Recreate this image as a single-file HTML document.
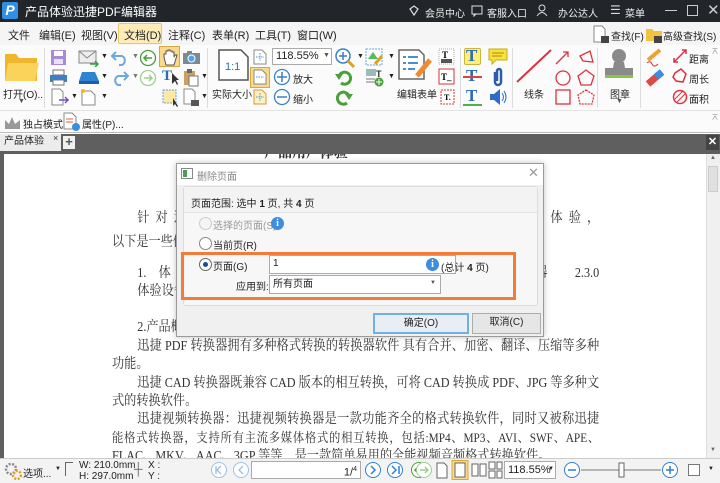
<!DOCTYPE html>
<html><head><meta charset="utf-8">
<style>
*{margin:0;padding:0;box-sizing:border-box}
body{width:720px;height:483px;overflow:hidden;position:relative;background:#fff;font-family:"Liberation Sans","Noto Sans CJK SC",sans-serif;font-size:11px;color:#222}
.a{position:absolute;white-space:nowrap}
.t{font-size:10px}
.sep{position:absolute;width:1px;background:#dcdcdc}
.dc{position:absolute;left:112px;top:0;width:560px;height:458px;transform:scaleX(0.87);transform-origin:0 0;overflow:visible}
.doc{position:absolute;font-family:"Liberation Serif","Noto Serif CJK SC",serif;font-size:14px;color:#333;white-space:nowrap}
.j{text-align:justify;text-align-last:justify;white-space:normal;overflow:hidden;height:20px}
.rad{position:absolute;width:13px;height:13px;border-radius:50%;border:1px solid #888;background:#fff}
.info{position:absolute;width:13px;height:13px;border-radius:50%;background:#3b8ee0;color:#fff;font-size:10px;text-align:center;line-height:13px;font-weight:bold;font-family:"Liberation Serif",serif}
.btn{position:absolute;border:1px solid #adadad;background:#e6e6e6;text-align:center;font-size:10px;line-height:18px}
</style></head><body>
<!-- doc text first (under chrome) -->
<div class="dc">
<div class="doc" style="left:175px;top:139px;font-weight:bold;font-size:16px">产品用户体验</div>
<div class="doc j" style="left:29px;top:207px;width:531px">针对迅捷PDF转换器系列软件进行产品评测提升用户体验，</div>
<div class="doc" style="left:0;top:231px">以下是一些体验内容。</div>
<div class="doc j" style="left:29px;top:262px;width:531px">1.体验对象：迅捷PDF转换器迅捷转换器 2.3.0</div>
<div class="doc" style="left:29px;top:280px">体验设备：电脑</div>
<div class="doc" style="left:29px;top:316px">2.产品概述</div>
<div class="doc j" style="left:29px;top:335px;width:531px">迅捷 PDF 转换器拥有多种格式转换的转换器软件 具有合并、加密、翻译、压缩等多种</div>
<div class="doc" style="left:0;top:353px">功能。</div>
<div class="doc j" style="left:29px;top:372px;width:531px">迅捷 CAD 转换器既兼容 CAD 版本的相互转换，可将 CAD 转换成 PDF、JPG 等多种文件格</div>
<div class="doc" style="left:0;top:390px">式的转换软件。</div>
<div class="doc j" style="left:29px;top:408px;width:531px">迅捷视频转换器：迅捷视频转换器是一款功能齐全的格式转换软件，同时又被称迅捷万</div>
<div class="doc j" style="left:0;top:427px;width:560px;font-size:13px">能格式转换器，支持所有主流多媒体格式的相互转换，包括:MP4、MP3、AVI、SWF、APE、FLV、</div>
<div class="doc" style="left:0;top:445px">FLAC、MKV、AAC、3GP 等等，是一款简单易用的全能视频音频格式转换软件。</div>
</div>
<!-- title bar -->
<div class="a" style="left:0;top:0;width:720px;height:22px;background:#22262b"></div>
<div class="a" style="left:2px;top:2px;width:16px;height:17px;background:#2f8fe6;border-radius:2px;color:#fff;font-weight:bold;font-size:14px;text-align:center;line-height:17px;font-style:italic">P</div>
<div class="a" style="left:25px;top:3px;color:#fff;font-size:12px">产品体验迅捷PDF编辑器</div>
<svg class="a" style="left:408px;top:5px" width="12" height="12"><path d="M2 4 L6 1 L10 4 L6 10 Z" fill="none" stroke="#ddd" stroke-width="1.2"/></svg>
<div class="a" style="left:425px;top:5px;color:#eee;font-size:10px">会员中心</div>
<svg class="a" style="left:471px;top:5px" width="12" height="12"><rect x="1" y="1" width="10" height="8" fill="none" stroke="#ddd"/><path d="M3 9 L3 11 L5 9" stroke="#ddd" fill="none"/></svg>
<div class="a" style="left:487px;top:5px;color:#eee;font-size:10px">客服入口</div>
<svg class="a" style="left:536px;top:4px" width="12" height="13"><circle cx="6" cy="4" r="3" fill="none" stroke="#ddd"/><path d="M1 12 Q6 5 11 12" fill="none" stroke="#ddd"/></svg>
<div class="a" style="left:558px;top:5px;color:#eee;font-size:10px">办公达人</div>
<div class="a" style="left:610px;top:3px;color:#ddd;font-size:12px">☰</div>
<div class="a" style="left:625px;top:5px;color:#eee;font-size:10px">菜单</div>
<div class="a" style="left:665px;top:10px;width:12px;height:1px;background:#ccc"></div>
<div class="a" style="left:687px;top:5px;width:11px;height:11px;border:1px solid #ccc"></div>
<div class="a" style="left:707px;top:1px;color:#ccc;font-size:15px">✕</div>
<!-- menu -->
<div class="a" style="left:0;top:22px;width:720px;height:23px;background:#f5f5f5"></div>
<div class="a" style="left:118px;top:23px;width:44px;height:21px;background:#fcecb8;border:1px solid #e8c76a;border-radius:2px"></div>
<div class="a" style="left:8px;top:27px">文件</div>
<div class="a" style="left:39px;top:27px">编辑(E)</div>
<div class="a" style="left:81px;top:27px">视图(V)</div>
<div class="a" style="left:124px;top:27px">文档(D)</div>
<div class="a" style="left:168px;top:27px">注释(C)</div>
<div class="a" style="left:212px;top:27px">表单(R)</div>
<div class="a" style="left:255px;top:27px">工具(T)</div>
<div class="a" style="left:297px;top:27px">窗口(W)</div>
<svg class="a" style="left:592px;top:25px" width="18" height="19"><path d="M2 1 H10 L13 4 V17 H2 Z" fill="#fff" stroke="#888"/><rect x="9" y="11" width="8" height="7" fill="#444"/></svg>
<div class="a t" style="left:611px;top:28px">查找(F)</div>
<svg class="a" style="left:645px;top:25px" width="18" height="19"><path d="M1 4 H7 L9 6 H17 V16 H1 Z" fill="#f3c340"/><rect x="9" y="11" width="8" height="7" fill="#444"/></svg>
<div class="a t" style="left:663px;top:28px">高级查找(S)</div>
<!-- toolbar -->
<div class="a" style="left:0;top:45px;width:720px;height:66px;background:#fbfbfb;border-bottom:1px solid #e3e3e3"></div>
<svg class="a" style="left:4px;top:51px" width="36" height="32"><path d="M1 3 H12 L15 7 H33 V30 H1 Z" fill="#f0b52a"/><path d="M4 12 H35 L31 30 H1 Z" fill="#fcd35a"/></svg>
<div class="a t" style="left:3px;top:86px">打开(O)...</div>
<div class="a" style="left:18px;top:98px;font-size:7px;color:#555">▼</div>
<div class="sep" style="left:44px;top:48px;height:60px"></div>
<svg class="a" style="left:50px;top:49px" width="17" height="17"><rect x="1" y="1" width="15" height="15" fill="#a98ad6"/><rect x="4" y="2" width="9" height="5" fill="#fff"/><rect x="4" y="10" width="9" height="5" fill="#e8e0f5"/></svg>
<svg class="a" style="left:49px;top:69px" width="19" height="17"><rect x="4" y="1" width="11" height="5" fill="#fff" stroke="#777"/><rect x="1" y="6" width="17" height="7" fill="#3a7fc8"/><rect x="4" y="11" width="11" height="5" fill="#fff" stroke="#777"/></svg>
<svg class="a" style="left:50px;top:88px" width="20" height="18"><path d="M2 1 H10 L13 4 V17 H2 Z" fill="#fff" stroke="#888"/><path d="M9 12 H18 M15 9 L18 12 L15 15" stroke="#7a4cc8" fill="none" stroke-width="1.5"/></svg>
<svg class="a" style="left:78px;top:50px" width="22" height="17"><rect x="1" y="1" width="17" height="12" fill="#eee" stroke="#888"/><path d="M1 1 L9 8 L18 1" fill="none" stroke="#888"/><path d="M12 14 H20 M17 11 L20 14 L17 17" stroke="#2aa34a" stroke-width="1.5" fill="none"/></svg>
<svg class="a" style="left:78px;top:71px" width="22" height="14"><path d="M4 1 H17 L21 10 H1 Z" fill="#2f82d2"/><rect x="1" y="10" width="20" height="3" fill="#1c5ea8"/></svg>
<svg class="a" style="left:79px;top:88px" width="20" height="18"><path d="M3 3 H12 L16 7 V17 H3 Z" fill="#fff" stroke="#888"/><circle cx="4" cy="3" r="2" fill="#f0b52a"/></svg>
<div class="a" style="left:101px;top:53px;font-size:7px">▼</div><div class="a" style="left:101px;top:73px;font-size:7px">▼</div><div class="a" style="left:71px;top:93px;font-size:7px">▼</div><div class="a" style="left:101px;top:93px;font-size:7px">▼</div>
<svg class="a" style="left:110px;top:50px" width="20" height="16"><path d="M6 2 L2 6 L6 10 M2 6 H12 A5 5 0 0 1 12 15 H9" fill="none" stroke="#6fa6e0" stroke-width="2"/></svg>
<svg class="a" style="left:110px;top:70px" width="20" height="16"><path d="M14 2 L18 6 L14 10 M18 6 H8 A5 5 0 0 0 8 15 H11" fill="none" stroke="#6fa6e0" stroke-width="2"/></svg>
<div class="a" style="left:132px;top:53px;font-size:7px;color:#777">▼</div><div class="a" style="left:132px;top:73px;font-size:7px;color:#777">▼</div>
<svg class="a" style="left:139px;top:49px" width="18" height="18"><circle cx="9" cy="9" r="7.5" fill="#fff" stroke="#4a9c3a" stroke-width="1.3"/><path d="M13 9 H5 M8 6 L5 9 L8 12" stroke="#4a9c3a" stroke-width="1.5" fill="none"/></svg>
<svg class="a" style="left:139px;top:69px" width="18" height="18"><circle cx="9" cy="9" r="7.5" fill="#fff" stroke="#9ccf8e" stroke-width="1.3"/><path d="M5 9 H13 M10 6 L13 9 L10 12" stroke="#9ccf8e" stroke-width="1.5" fill="none"/></svg>
<div class="a" style="left:159px;top:46px;width:21px;height:21px;background:#fad98c;border:1px solid #d9a83c"></div>
<svg class="a" style="left:162px;top:48px" width="16" height="18"><path d="M4 17 L2 9 V6 H4 V3 H6 V2 H8 V3 H10 V4 H12 V9 L13 7 H15 L12 17 Z" fill="#fff" stroke="#555"/></svg>
<svg class="a" style="left:182px;top:50px" width="19" height="15"><rect x="1" y="3" width="17" height="11" fill="#7c8a96"/><circle cx="9.5" cy="8.5" r="3.5" fill="#4aa6f0" stroke="#fff"/><rect x="5" y="1" width="5" height="3" fill="#7c8a96"/></svg>
<div class="a" style="left:162px;top:68px;font-family:'Liberation Serif';font-weight:bold;font-size:15px;color:#2d6cb0">T</div>
<svg class="a" style="left:171px;top:72px" width="9" height="14"><path d="M1 1 L1 12 L4 9 L6 13 L7 12 L5 8 L8 8 Z" fill="#333"/></svg>
<svg class="a" style="left:183px;top:68px" width="16" height="19"><rect x="1" y="3" width="11" height="14" fill="#c9a263"/><rect x="4" y="1" width="5" height="4" fill="#666"/><rect x="6" y="8" width="9" height="10" fill="#fff" stroke="#777"/></svg>
<div class="a" style="left:201px;top:73px;font-size:7px">▼</div>
<svg class="a" style="left:161px;top:88px" width="20" height="19"><rect x="2" y="2" width="13" height="13" fill="#fde9a6" stroke="#6aa4e0" stroke-dasharray="2 1"/><path d="M12 10 L12 18 L14 16 L16 19 L17 18 Z" fill="#333"/></svg>
<svg class="a" style="left:183px;top:88px" width="18" height="19"><path d="M1 1 H9 L12 4 V16 H1 Z" fill="#fff" stroke="#888"/><rect x="8" y="12" width="8" height="6" fill="#555"/></svg>
<div class="a" style="left:201px;top:93px;font-size:7px">▼</div>
<div class="sep" style="left:207px;top:48px;height:60px"></div>
<svg class="a" style="left:217px;top:49px" width="33" height="33"><path d="M2 1 H24 L31 8 V31 H2 Z" fill="#fff" stroke="#555" stroke-width="1.5"/><text x="8" y="21" font-family="Liberation Sans" font-size="11" fill="#2d6cb0">1:1</text></svg>
<div class="a t" style="left:212px;top:86px">实际大小</div>
<svg class="a" style="left:253px;top:49px" width="14" height="16"><path d="M1 1 H9 L13 5 V15 H1 Z" fill="#fff" stroke="#888"/><path d="M7 4 V12 M3 8 H11" stroke="#4a90e0" stroke-dasharray="1.5 1"/></svg>
<div class="a" style="left:250px;top:67px;width:20px;height:21px;background:#fad98c;border:1px solid #d9a83c"></div>
<svg class="a" style="left:253px;top:69px" width="14" height="16"><path d="M1 1 H9 L13 5 V15 H1 Z" fill="#fff" stroke="#888"/><path d="M3 8 H11" stroke="#4a90e0" stroke-dasharray="1.5 1"/></svg>
<svg class="a" style="left:253px;top:89px" width="14" height="16"><path d="M1 1 H9 L13 5 V15 H1 Z" fill="#fdf0c0" stroke="#d89a30"/><path d="M7 4 V12 M3 8 H11" stroke="#4a90e0" stroke-dasharray="1.5 1"/></svg>
<div class="a" style="left:272px;top:48px;width:60px;height:17px;background:#fff;border:1px solid #aaa;font-size:11px;padding-left:3px;line-height:15px">118.55%</div>
<div class="a" style="left:323px;top:52px;font-size:7px;color:#555">▼</div>
<svg class="a" style="left:273px;top:68px" width="18" height="18"><circle cx="9" cy="9" r="7.5" fill="#fff" stroke="#3a7fc8" stroke-width="1.3"/><path d="M9 4 V14 M4 9 H14" stroke="#3a7fc8" stroke-width="1.5"/></svg>
<div class="a t" style="left:293px;top:71px">放大</div>
<svg class="a" style="left:273px;top:88px" width="18" height="18"><circle cx="9" cy="9" r="7.5" fill="#fff" stroke="#3a7fc8" stroke-width="1.3"/><path d="M4 9 H14" stroke="#3a7fc8" stroke-width="1.5"/></svg>
<div class="a t" style="left:293px;top:91px">缩小</div>
<svg class="a" style="left:334px;top:47px" width="22" height="22"><circle cx="9" cy="9" r="7" fill="#fff" stroke="#3a7fc8" stroke-width="1.5"/><path d="M9 5 V13 M5 9 H13" stroke="#3a7fc8" stroke-width="1.5"/><path d="M14 14 L20 20" stroke="#e0a020" stroke-width="3"/></svg>
<div class="a" style="left:357px;top:53px;font-size:7px">▼</div>
<svg class="a" style="left:335px;top:69px" width="18" height="17"><path d="M4 7 A6 6 0 1 1 6 14" fill="none" stroke="#4aa03a" stroke-width="3"/><path d="M0 5 L8 5 L4 11 Z" fill="#4aa03a"/></svg>
<svg class="a" style="left:335px;top:89px" width="18" height="17"><path d="M14 7 A6 6 0 1 0 12 14" fill="none" stroke="#4aa03a" stroke-width="3"/><path d="M18 5 L10 5 L14 11 Z" fill="#4aa03a"/></svg>
<svg class="a" style="left:365px;top:48px" width="20" height="19"><rect x="1" y="1" width="16" height="16" fill="none" stroke="#6aa4e0" stroke-dasharray="2 1"/><path d="M3 11 L8 4 L13 11 Z" fill="#5cb85c"/><path d="M10 16 L17 8" stroke="#e0a020" stroke-width="3"/></svg>
<svg class="a" style="left:365px;top:68px" width="20" height="19"><rect x="1" y="1" width="10" height="7" fill="#9bb"/><text x="11" y="9" font-size="9" font-weight="bold" fill="#333">T</text><path d="M1 11 H10 M1 14 H10" stroke="#777"/><circle cx="14" cy="14" r="4.5" fill="#4aa03a"/><path d="M14 11 V17 M11 14 H17" stroke="#fff"/></svg>
<div class="a" style="left:388px;top:53px;font-size:7px">▼</div><div class="a" style="left:388px;top:73px;font-size:7px">▼</div>
<svg class="a" style="left:397px;top:48px" width="36" height="34"><path d="M2 2 H22 L27 7 V31 H2 Z" fill="#fff" stroke="#666" stroke-width="1.5"/><path d="M6 9 H9 M11 9 H21 M6 15 H9 M11 15 H21 M6 21 H9 M11 21 H18" stroke="#4a90d0" stroke-width="2"/><path d="M20 28 L33 12" stroke="#f08a30" stroke-width="5"/></svg>
<div class="a t" style="left:397px;top:86px">编辑表单</div>
<svg class="a" style="left:438px;top:48px" width="17" height="58"><rect x="1" y="1" width="15" height="15" fill="#fff" stroke="#aaa" stroke-dasharray="1 1"/><text x="4" y="10" font-size="9" font-weight="bold" font-family="Liberation Serif">T</text><rect x="3" y="11" width="11" height="4" fill="#555"/><rect x="1" y="21" width="15" height="15" fill="#fff" stroke="#d33"/><text x="3" y="32" font-size="9" font-weight="bold" font-family="Liberation Serif">T_</text><rect x="3" y="42" width="13" height="14" fill="#fff" stroke="#d33" stroke-dasharray="2 1"/><text x="6" y="52" font-size="8" font-weight="bold" font-family="Liberation Serif">T.</text></svg>
<div class="sep" style="left:460px;top:48px;height:60px"></div>
<div class="a" style="left:464px;top:48px;width:17px;height:17px;background:#fbf07a;border:1px solid #ccb53a;border-radius:2px"></div>
<div class="a" style="left:466px;top:46px;font-family:'Liberation Serif';font-weight:bold;font-size:17px;color:#2d6cb0">T</div>
<div class="a" style="left:466px;top:66px;font-family:'Liberation Serif';font-weight:bold;font-size:17px;color:#2d6cb0">T</div>
<div class="a" style="left:463px;top:76px;width:19px;height:2px;background:#e04040"></div>
<div class="a" style="left:466px;top:86px;font-family:'Liberation Serif';font-weight:bold;font-size:17px;color:#2d6cb0">T</div>
<div class="a" style="left:463px;top:104px;width:19px;height:2px;background:#4ab04a"></div>
<svg class="a" style="left:488px;top:48px" width="20" height="18"><path d="M1 1 H19 V12 H8 L4 16 V12 H1 Z" fill="#f7e23a" stroke="#c8a820"/><path d="M4 5 H16 M4 8 H14" stroke="#a88a10"/></svg>
<svg class="a" style="left:492px;top:67px" width="12" height="20"><path d="M3 5 V15 A3 3 0 0 0 9 15 V4 A2 2 0 0 0 5 4 V14" fill="none" stroke="#2d5ca8" stroke-width="2.5"/></svg>
<svg class="a" style="left:489px;top:88px" width="20" height="18"><path d="M1 6 H5 L11 1 V17 L5 12 H1 Z" fill="#2d6cc8"/><path d="M13 5 Q16 9 13 13 M15 3 Q19 9 15 15" fill="none" stroke="#2d6cc8"/></svg>
<div class="sep" style="left:512px;top:48px;height:60px"></div>
<svg class="a" style="left:515px;top:48px" width="38" height="36"><path d="M2 34 L36 2" stroke="#e03040" stroke-width="2"/></svg>
<div class="a t" style="left:524px;top:86px">线条</div>
<svg class="a" style="left:553px;top:48px" width="46" height="58"><path d="M3 16 L15 4 M10 4 H15 V9" stroke="#e03040" stroke-width="1.3" fill="none"/><path d="M27 8 L37 3 L40 14 L30 13 Z" fill="none" stroke="#e03040" stroke-width="1.3"/><circle cx="10" cy="30" r="7" fill="none" stroke="#e03040" stroke-width="1.3"/><path d="M33 22 L41 28 L38 37 L28 37 L25 28 Z" fill="none" stroke="#e03040" stroke-width="1.3"/><rect x="3" y="42" width="14" height="14" fill="none" stroke="#e03040" stroke-width="1.3"/><path d="M33 42 L41 47 L39 56 L27 56 L25 47 Z" fill="none" stroke="#e03040" stroke-width="1.3" stroke-dasharray="2 1"/></svg>
<div class="sep" style="left:597px;top:48px;height:60px"></div>
<svg class="a" style="left:602px;top:47px" width="34" height="34"><circle cx="17" cy="9" r="7" fill="#8a8a8a"/><path d="M12 15 H22 L23 21 H31 V28 H3 V21 H11 Z" fill="#8a8a8a"/><rect x="3" y="28" width="28" height="3" fill="#8bc34a"/></svg>
<div class="a t" style="left:610px;top:86px">图章</div>
<div class="a" style="left:616px;top:98px;font-size:7px;color:#555">▼</div>
<div class="sep" style="left:640px;top:48px;height:60px"></div>
<svg class="a" style="left:645px;top:48px" width="20" height="40"><path d="M3 12 L15 2" stroke="#f0a030" stroke-width="4"/><path d="M2 15 Q5 12 7 16 T13 16" stroke="#e03040" fill="none"/><path d="M3 36 L17 24" stroke="#e04848" stroke-width="7"/><path d="M11 29 L17 24" stroke="#3a8ee0" stroke-width="7"/></svg>
<svg class="a" style="left:672px;top:47px" width="16" height="60"><path d="M2 15 L14 3 M2 11 V15 H6 M10 3 H14 V7" stroke="#e03040" stroke-width="1.5" fill="none"/><path d="M3 26 L9 22 L14 27 L11 35 L4 34 L1 30 Z" fill="none" stroke="#e03040" stroke-width="1.5"/><circle cx="8" cy="50" r="6.5" fill="none" stroke="#e03040" stroke-width="1.5"/><path d="M3 52 L11 44 M5 55 L13 47" stroke="#e03040"/></svg>
<div class="a t" style="left:689px;top:51px">距离</div>
<div class="a t" style="left:689px;top:71px">周长</div>
<div class="a t" style="left:689px;top:91px">面积</div>
<div class="a" style="left:711px;top:46px;font-size:8px;color:#777">⌅</div>
<!-- second row -->
<div class="a" style="left:0;top:111px;width:720px;height:22px;background:#fbfbfb;border-bottom:1px solid #bbb"></div>
<svg class="a" style="left:4px;top:114px" width="17" height="16"><path d="M1 15 V6 L5 10 L8 3 L11 10 L16 6 V15 Z" fill="#999"/></svg>
<div class="a t" style="left:23px;top:116px">独占模式</div>
<svg class="a" style="left:63px;top:112px" width="17" height="20"><path d="M1 1 H9 L13 5 V17 H1 Z" fill="#fff" stroke="#888"/><path d="M3 7 H10 M3 10 H10" stroke="#e06040"/><circle cx="13" cy="15" r="4" fill="#3a8ee0"/></svg>
<div class="a t" style="left:82px;top:116px">属性(P)...</div>
<div class="a" style="left:711px;top:112px;font-size:8px;color:#777">⌅</div>
<!-- tab bar -->
<div class="a" style="left:0;top:134px;width:720px;height:17px;background:#5f5f5f"></div>
<div class="a" style="left:0;top:134px;width:61px;height:17px;background:#ececec;font-size:10px;padding-left:4px;line-height:16px">产品体验</div>
<div class="a" style="left:53px;top:133px;font-size:9px;color:#333">×</div>
<div class="a" style="left:63px;top:136px;width:12px;height:13px;background:#f0f0f0;font-weight:bold;font-size:13px;line-height:12px;text-align:center;color:#555">+</div>
<div class="a" style="left:706px;top:135px;width:13px;height:15px;background:#444;color:#fff;font-size:11px;text-align:center;line-height:15px;font-weight:bold">✕</div>
<!-- doc frame -->
<div class="a" style="left:0;top:151px;width:720px;height:3px;background:#5f5f5f"></div>
<div class="a" style="left:0;top:151px;width:4px;height:307px;background:#5f5f5f"></div>
<div class="a" style="left:706px;top:154px;width:14px;height:304px;background:#f0f0f0;border-left:1px solid #ddd"></div>
<div class="a" style="left:710px;top:155px;font-size:6px;color:#666">▲</div>
<div class="a" style="left:708px;top:166px;width:10px;height:26px;background:#e0e0e0;border:1px solid #ccc"></div>
<div class="a" style="left:710px;top:447px;font-size:6px;color:#666">▼</div>
<!-- dialog -->
<div class="a" style="left:176px;top:163px;width:368px;height:174px;background:#f0f0f0;border:1px solid #9a9a9a;box-shadow:0 0 6px rgba(0,0,0,.25)"></div>
<div class="a" style="left:177px;top:164px;width:366px;height:21px;background:#fff"></div>
<svg class="a" style="left:181px;top:168px" width="12" height="11"><rect x="0.5" y="0.5" width="11" height="10" fill="#fff" stroke="#888"/><rect x="2" y="2" width="4" height="7" fill="#4a9a5a"/></svg>
<div class="a" style="left:197px;top:168px;font-size:10px;color:#888">删除页面</div>
<div class="a" style="left:528px;top:165px;font-size:13px;color:#999">✕</div>
<div class="a" style="left:183px;top:186px;width:355px;height:120px;background:#f7f7f7;border:1px solid #dcdcdc;border-radius:3px"></div>
<div class="a" style="left:184px;top:187px;width:353px;height:26px;background:#f3f3f3;border-bottom:1px solid #e3e3e3"></div>
<div class="a" style="left:191px;top:195px;font-size:10px">页面范围: 选中 <b>1</b> 页, 共 <b>4</b> 页</div>
<div class="rad" style="left:199px;top:217px;border-color:#ccc;background:#f5f5f5"></div>
<div class="a" style="left:213px;top:217px;font-size:10px;color:#999">选择的页面(S)</div>
<div class="info" style="left:271px;top:217px">i</div>
<div class="rad" style="left:199px;top:237px"></div>
<div class="a" style="left:213px;top:237px;font-size:10px">当前页(R)</div>
<div class="rad" style="left:199px;top:258px;border-color:#666"></div>
<div class="a" style="left:203px;top:262px;width:5px;height:5px;border-radius:50%;background:#1a4a9a"></div>
<div class="a" style="left:213px;top:258px;font-size:10px">页面(G)</div>
<div class="a" style="left:269px;top:255px;width:187px;height:19px;background:#fff;border:1px solid #aaa"></div>
<div class="a" style="left:273px;top:258px;font-size:10px">1</div>
<div class="info" style="left:426px;top:258px">i</div>
<div class="a" style="left:441px;top:259px;font-size:10px">(总计 <b>4</b> 页)</div>
<div class="a" style="left:236px;top:278px;font-size:10px">应用到:</div>
<div class="a" style="left:269px;top:275px;width:172px;height:19px;background:#fff;border:1px solid #aaa;font-size:10px;padding-left:3px;line-height:17px">所有页面</div>
<div class="a" style="left:430px;top:280px;font-size:6px;color:#555">▼</div>
<div class="a" style="left:181px;top:252px;width:335px;height:48px;border:3px solid #f47a3a"></div>
<div class="btn" style="left:373px;top:313px;width:96px;height:21px;border:2px solid #6fb0e6;background:#e8eef4">确定(O)</div>
<div class="btn" style="left:472px;top:313px;width:69px;height:21px">取消(C)</div>
<!-- status bar -->
<div class="a" style="left:0;top:458px;width:720px;height:25px;background:#f3f3f3;border-top:1px solid #ccc"></div>
<svg class="a" style="left:4px;top:462px" width="18" height="18"><circle cx="7" cy="7" r="5" fill="none" stroke="#888" stroke-width="2.5" stroke-dasharray="2 1.5"/><circle cx="13" cy="13" r="4" fill="none" stroke="#e0a020" stroke-width="2.5" stroke-dasharray="2 1.5"/></svg>
<div class="a" style="left:23px;top:465px;font-size:10px">选项...</div>
<div class="a" style="left:55px;top:466px;font-size:6px">▼</div>
<div class="a" style="left:65px;top:462px;width:8px;height:14px;border-left:1px solid #666;border-top:1px solid #666"></div>
<div class="a" style="left:79px;top:460px;font-size:10px;line-height:11px">W: 210.0mm<br>H: 297.0mm</div>
<div class="a" style="left:134px;top:462px;font-size:12px;color:#666">┼</div>
<div class="a" style="left:148px;top:460px;font-size:10px;line-height:11px">X :<br>Y :</div>
<svg class="a" style="left:210px;top:461px" width="40" height="18"><circle cx="9" cy="9" r="7.5" fill="#fff" stroke="#9cc0e8"/><path d="M6 5 V13 M11 5 L7 9 L11 13" stroke="#9cc0e8" fill="none" stroke-width="1.4"/><circle cx="31" cy="9" r="7.5" fill="#fff" stroke="#9cc0e8"/><path d="M33 5 L29 9 L33 13" stroke="#9cc0e8" fill="none" stroke-width="1.4"/></svg>
<div class="a" style="left:251px;top:461px;width:110px;height:18px;background:#fff;border:1px solid #aaa;text-align:right;padding-right:3px;font-size:11px;line-height:16px">1/<sup style="font-size:7px">4</sup></div>
<svg class="a" style="left:364px;top:461px" width="80" height="18"><circle cx="9" cy="9" r="7.5" fill="#fff" stroke="#2f7fd0"/><path d="M7 5 L11 9 L7 13" stroke="#2f7fd0" fill="none" stroke-width="1.5"/><circle cx="31" cy="9" r="7.5" fill="#fff" stroke="#2f7fd0"/><path d="M28 5 L32 9 L28 13 M35 5 V13" stroke="#2f7fd0" fill="none" stroke-width="1.5"/><circle cx="55" cy="9" r="7.5" fill="#fff" stroke="#4aa03a"/><path d="M59 9 H51 M54 6 L51 9 L54 12" stroke="#4aa03a" fill="none" stroke-width="1.5"/></svg>
<svg class="a" style="left:415px;top:461px" width="18" height="18"><circle cx="9" cy="9" r="7.5" fill="#fff" stroke="#9ccf8e"/><path d="M5 9 H13 M10 6 L13 9 L10 12" stroke="#9ccf8e" fill="none" stroke-width="1.5"/></svg>
<svg class="a" style="left:435px;top:460px" width="68" height="20"><path d="M2 3 H9 L12 6 V18 H2 Z" fill="#fff" stroke="#666"/><rect x="17" y="0.5" width="16" height="19" fill="#fad98c" stroke="#d9a83c"/><path d="M20 3 H30 V17 H20 Z" fill="#fff" stroke="#666"/><path d="M37 4 H43 V16 H37 Z M45 4 H51 V16 H45 Z" fill="#fff" stroke="#666"/><path d="M54 2 H60 V9 H54 Z M62 2 H67 V9 H62 Z M54 11 H60 V18 H54 Z M62 11 H67 V18 H62 Z" fill="#fff" stroke="#666"/></svg>
<div class="a" style="left:504px;top:461px;width:52px;height:18px;background:#fff;border:1px solid #aaa;font-size:11px;padding-left:3px;line-height:16px">118.55%</div>
<div class="a" style="left:548px;top:466px;font-size:6px">▼</div>
<svg class="a" style="left:563px;top:461px" width="120" height="18"><circle cx="9" cy="9" r="7.5" fill="#fff" stroke="#2f7fd0"/><path d="M5 9 H13" stroke="#2f7fd0" stroke-width="1.5"/><path d="M18 9 H98" stroke="#777"/><rect x="56" y="2" width="5" height="14" fill="#fff" stroke="#666"/><circle cx="107" cy="9" r="7.5" fill="#fff" stroke="#2f7fd0"/><path d="M103 9 H111 M107 5 V13" stroke="#2f7fd0" stroke-width="1.5"/></svg>
<div class="a" style="left:688px;top:464px;width:12px;height:12px;border:1px solid #777;background:#fff"></div>
<div class="a" style="left:708px;top:466px;font-size:6px">▼</div>
</body></html>
